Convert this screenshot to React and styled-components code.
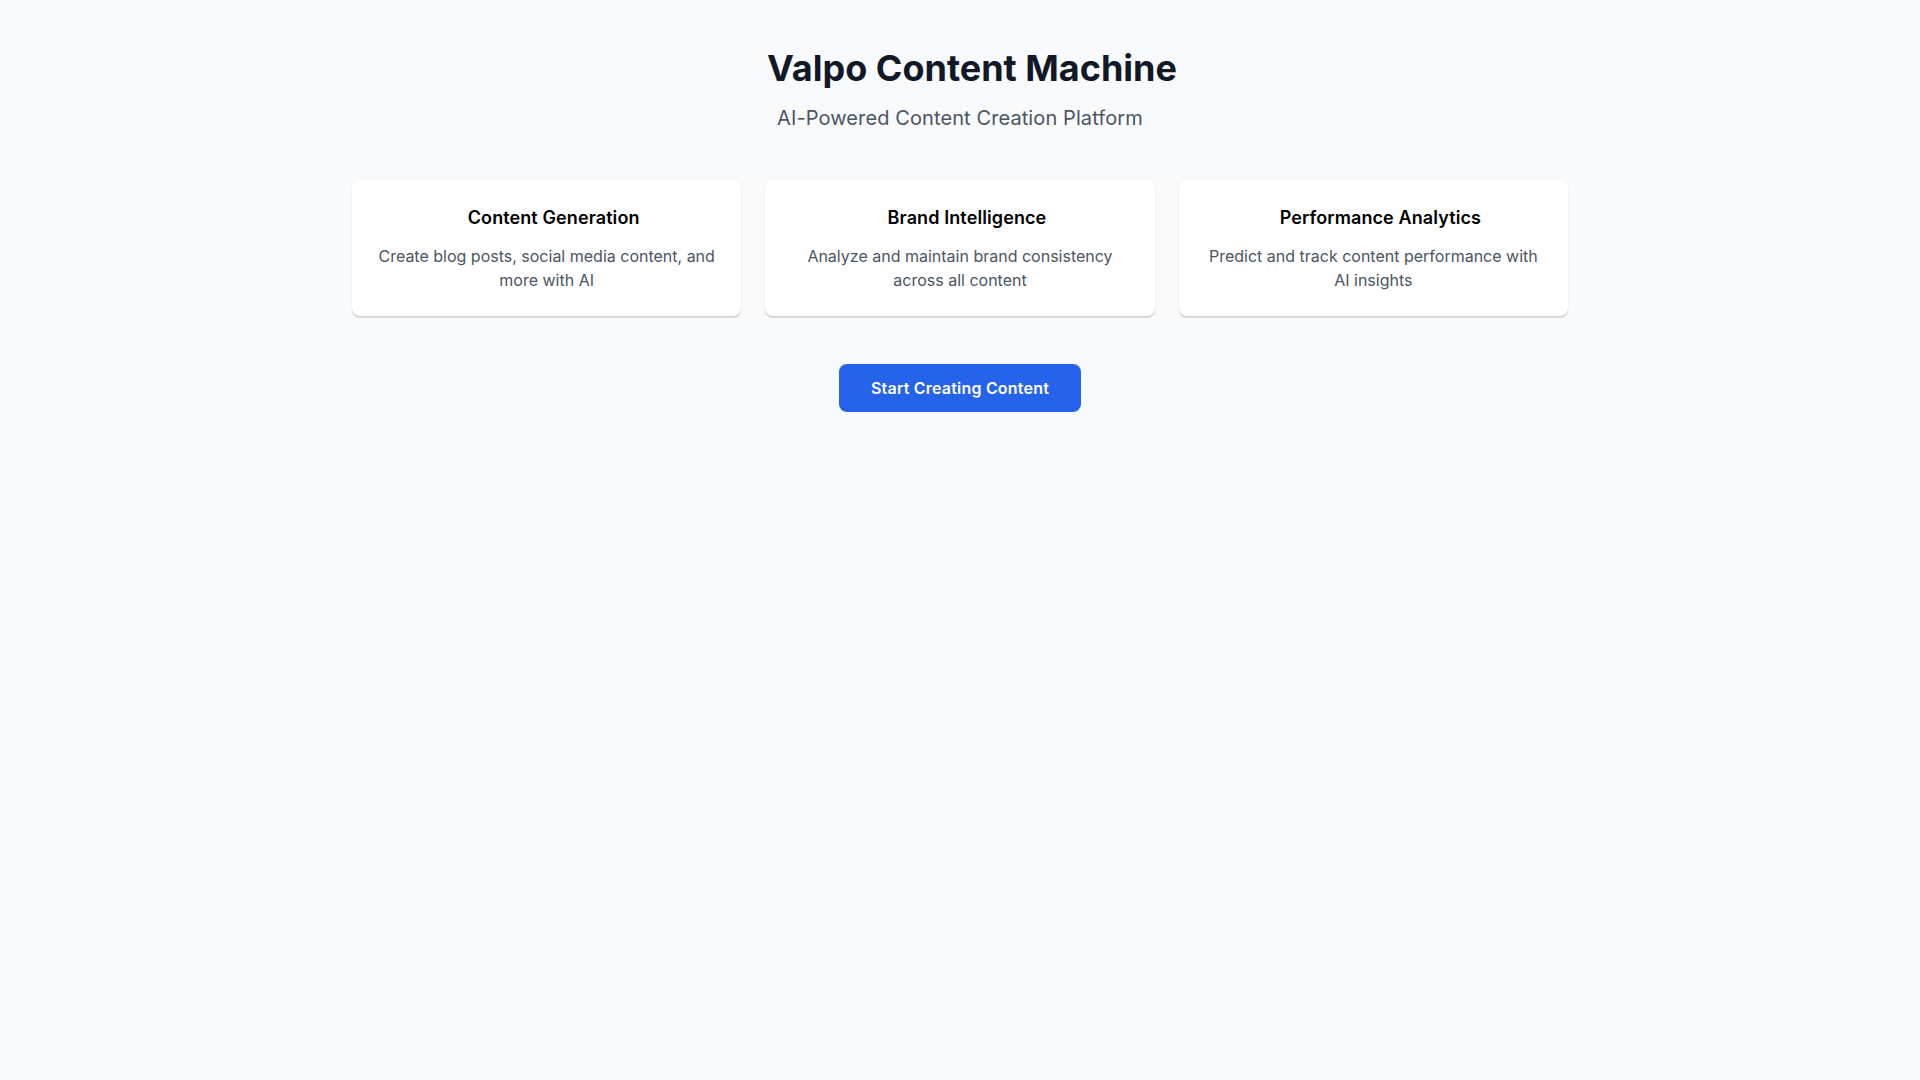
import React from "react";
import styled, { createGlobalStyle } from "styled-components";

const Global = createGlobalStyle`
  html, body { margin: 0; padding: 0; background: #f9fafb; }
  body { font-family: Inter, "Noto Sans", sans-serif; -webkit-font-smoothing: antialiased; }
  * { box-sizing: border-box; }
`;

const Page = styled.main`
  min-height: 100vh;
  background: #f9fafb;
  padding: 48px 32px;
`;

const Container = styled.div`
  max-width: 1280px;
  margin: 0 auto;
  padding: 0 32px;
  display: flex;
  flex-direction: column;
  align-items: center;
`;

const Title = styled.h1`
  margin: 0 0 16px;
  padding-left: 24px;
  font-size: 36px;
  line-height: 40px;
  font-weight: 700;
  color: #111827;
  text-align: center;
`;

const Subtitle = styled.p`
  margin: 0 0 48px;
  font-size: 20px;
  line-height: 28px;
  letter-spacing: 0.1px;
  color: #4b5563;
  text-align: center;
`;

const Grid = styled.div`
  width: 100%;
  display: grid;
  grid-template-columns: repeat(3, 1fr);
  gap: 24px;
  margin-bottom: 48px;
`;

const Card = styled.div`
  background: #ffffff;
  border-radius: 8px;
  padding: 24px;
  text-align: center;
  box-shadow: 0 2px 1px -0.5px rgba(0, 0, 0, 0.12), 0 1px 3px rgba(0, 0, 0, 0.05);
`;

const CardTitle = styled.h3`
  margin: 0 0 12px;
  padding-left: 14px;
  font-size: 18px;
  line-height: 28px;
  letter-spacing: 0.1px;
  font-weight: 600;
  color: #000;
`;

const CardText = styled.p`
  margin: 0;
  font-size: 16px;
  line-height: 24px;
  color: #4b5563;
`;

const Button = styled.button`
  background: #2563eb;
  color: #fff;
  border: none;
  border-radius: 8px;
  padding: 12px 32px;
  font-family: inherit;
  font-size: 16px;
  line-height: 24px;
  letter-spacing: 0.2px;
  font-weight: 600;
  cursor: pointer;
`;

const features = [
  { title: "Content Generation", text: "Create blog posts, social media content, and more with AI" },
  { title: "Brand Intelligence", text: "Analyze and maintain brand consistency across all content" },
  { title: "Performance Analytics", text: "Predict and track content performance with AI insights" },
];

export default function App() {
  return (
    <>
      <Global />
      <Page>
        <Container>
          <Title>Valpo Content Machine</Title>
          <Subtitle>AI-Powered Content Creation Platform</Subtitle>
          <Grid>
            {features.map((f) => (
              <Card key={f.title}>
                <CardTitle>{f.title}</CardTitle>
                <CardText>{f.text}</CardText>
              </Card>
            ))}
          </Grid>
          <Button>Start Creating Content</Button>
        </Container>
      </Page>
    </>
  );
}
